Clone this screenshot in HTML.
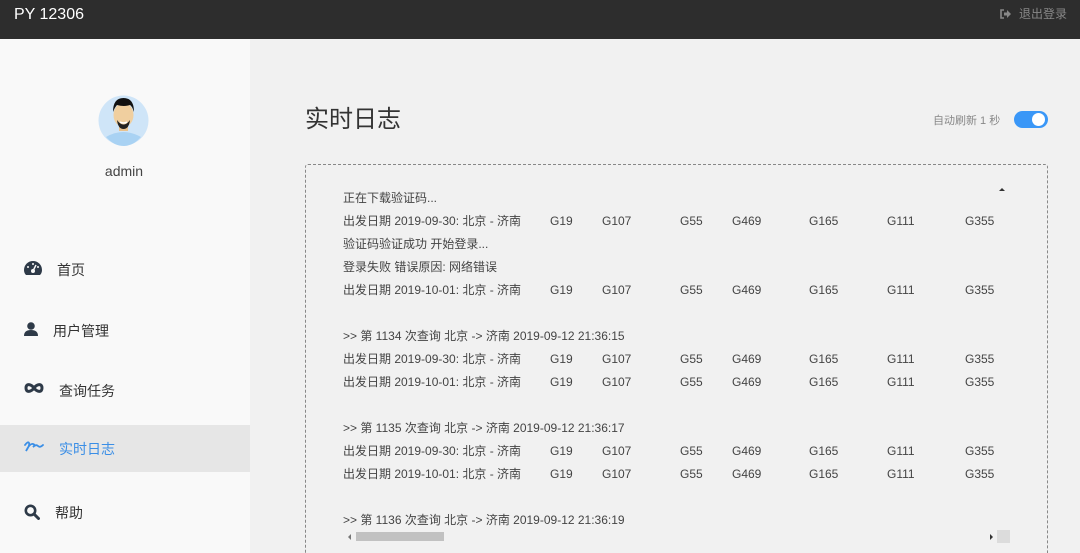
<!DOCTYPE html>
<html><head><meta charset="utf-8"><style>
*{margin:0;padding:0;box-sizing:border-box}
html{width:1080px;height:553px;overflow:hidden}
body{width:1080px;height:553px;overflow:hidden;background:#f1f1f1;font-family:"Liberation Sans","Noto Sans CJK SC",sans-serif;position:relative}
.hd{position:absolute;left:0;top:0;width:1080px;height:39px;background:#2d2d2d}
.logo{position:absolute;left:14px;top:6px;color:#fff;font-size:16px}
.out{position:absolute;right:13px;top:5px;color:#888;font-size:12px}
.sb{position:absolute;left:0;top:39px;width:250px;height:514px;background:#f9f9f9}
.av{position:absolute;left:98px;top:95px;width:51px;height:51px}
.name{position:absolute;left:0;width:248px;top:163px;text-align:center;color:#444;font-size:14px}
.mi{position:absolute;left:0;width:250px;height:47px;font-size:14px;color:#333}
.mi span{position:absolute;top:14px}
.mi svg{position:absolute;left:24px;top:15px}
.act{background:#e6e6e6;color:#3a8ee6}
h1{position:absolute;left:305px;top:99px;font-size:24px;font-weight:normal;color:#333}
.ar{position:absolute;left:933px;top:112px;font-size:11px;color:#888}
.tg{position:absolute;left:1014px;top:111px;width:34px;height:17px;border-radius:9px;background:#3a97f7}
.tg i{position:absolute;right:3px;top:2px;width:13px;height:13px;border-radius:50%;background:#fff}
.box{position:absolute;left:305px;top:164px;width:743px;height:400px;border:1px dashed #888;border-radius:3px}
.ln,.c{position:absolute;font-size:12px;line-height:16px;color:#444;white-space:pre}
.ln{left:343px}
</style></head><body>
<div class="hd"><div class="logo">PY 12306</div>
<div class="out"><svg width="11" height="10" viewBox="0 0 11 10" style="vertical-align:-1px;margin-right:8px"><path d="M4 1H1v8h3" fill="none" stroke="#888" stroke-width="1.6"/><path d="M4 3.5h3V1l4 4-4 4V6.5H4z" fill="#888"/></svg>退出登录</div></div>
<div class="sb"></div>
<svg class="av" viewBox="0 0 51 51"><circle cx="25.5" cy="25.5" r="25" fill="#cfe5f8"/><path d="M8 42q17-10 35 0 -8 9-17 9 -10 0-18-9z" fill="#a9d2f3"/><rect x="21" y="27" width="9" height="9" fill="#e8c28f"/><ellipse cx="25.5" cy="20" rx="10" ry="12" fill="#f0cf9f"/><path d="M15 17q0-14 10.5-14T36 17q-2-6-4-7-6 2-13 0-2 2-4 7z" fill="#111"/><path d="M19 25q6.5 9 13 0 -1 9-6.5 9T19 25z" fill="#222"/><path d="M22 27q3.5 2 7 0" stroke="#fff" stroke-width="1.5" fill="none"/></svg>
<div class="name">admin</div>
<div class="mi" style="top:246px"><svg width="18" height="14" viewBox="0 0 18 14"><path d="M9 0a9 9 0 0 0-9 9q0 3 2 5h14q2-2 2-5a9 9 0 0 0-9-9z" fill="#2e3a48"/><circle cx="9" cy="10" r="2" fill="#f9f9f9"/><path d="M9 10l3-6" stroke="#f9f9f9" stroke-width="1.5"/><circle cx="4" cy="6" r="1" fill="#f9f9f9"/><circle cx="14" cy="6" r="1" fill="#f9f9f9"/><circle cx="9" cy="3" r="1" fill="#f9f9f9"/></svg><span style="left:57px">首页</span></div>
<div class="mi" style="top:307px"><svg width="14" height="14" viewBox="0 0 14 14"><circle cx="7" cy="4" r="3.8" fill="#2e3a48"/><path d="M0 14q0-6 7-6t7 6z" fill="#2e3a48"/></svg><span style="left:53px">用户管理</span></div>
<div class="mi" style="top:367px"><svg width="20" height="12" viewBox="0 0 20 12"><path d="M10 6C7 2 2 1 2 6s5 4 8 0c3-4 8-5 8 0s-5 4-8 0z" fill="none" stroke="#2e3a48" stroke-width="3"/></svg><span style="left:59px">查询任务</span></div>
<div class="mi act" style="top:425px"><svg width="20" height="12" viewBox="0 0 20 12"><path d="M1 5q3-4 4-2t-3 8q4-8 7-7t0 3q3-3 5-1t5-1" fill="none" stroke="#3a8ee6" stroke-width="1.8" stroke-linecap="round"/></svg><span style="left:59px">实时日志</span></div>
<div class="mi" style="top:489px"><svg width="16" height="16" viewBox="0 0 16 16"><circle cx="6.5" cy="6.5" r="4.7" fill="none" stroke="#2e3a48" stroke-width="2.6"/><path d="M10 10l4.5 4.5" stroke="#2e3a48" stroke-width="3" stroke-linecap="round"/></svg><span style="left:55px">帮助</span></div>
<h1>实时日志</h1>
<div class="ar">自动刷新 1 秒</div><div class="tg"><i></i></div>
<div class="box"></div>
<div style="position:absolute;left:999px;top:188px;width:0;height:0;border:3px solid transparent;border-bottom-color:#333;border-top:0"></div>
<div id="log"></div>
<div style="position:absolute;left:356px;top:532px;width:88px;height:9px;background:#c1c1c1"></div>
<div style="position:absolute;left:348px;top:534px;border:3px solid transparent;border-right-color:#777;border-left:0"></div>
<div style="position:absolute;left:990px;top:534px;border:3px solid transparent;border-left-color:#333;border-right:0"></div>
<div style="position:absolute;left:997px;top:530px;width:13px;height:13px;background:#dcdcdc"></div>
<script>
var L=[[197,"正在下载验证码..."],[220,"出发日期 2019-09-30: 北京 - 济南",1],[243,"验证码验证成功 开始登录..."],[266,"登录失败 错误原因: 网络错误"],[289,"出发日期 2019-10-01: 北京 - 济南",1],[335,">> 第 1134 次查询 北京 -> 济南 2019-09-12 21:36:15"],[358,"出发日期 2019-09-30: 北京 - 济南",1],[381,"出发日期 2019-10-01: 北京 - 济南",1],[427,">> 第 1135 次查询 北京 -> 济南 2019-09-12 21:36:17"],[450,"出发日期 2019-09-30: 北京 - 济南",1],[473,"出发日期 2019-10-01: 北京 - 济南",1],[519,">> 第 1136 次查询 北京 -> 济南 2019-09-12 21:36:19"]];
var C=[[550,"G19"],[602,"G107"],[680,"G55"],[732,"G469"],[809,"G165"],[887,"G111"],[965,"G355"]];
var h="";L.forEach(function(l){var t=l[0]-7;h+='<div class="ln" style="top:'+t+'px">'+l[1].replace(/</g,"&lt;").replace(/>/g,"&gt;")+'</div>';if(l[2])C.forEach(function(c){h+='<div class="c" style="left:'+c[0]+'px;top:'+t+'px">'+c[1]+'</div>'})});
document.getElementById("log").innerHTML=h;
</script>
</body></html>
